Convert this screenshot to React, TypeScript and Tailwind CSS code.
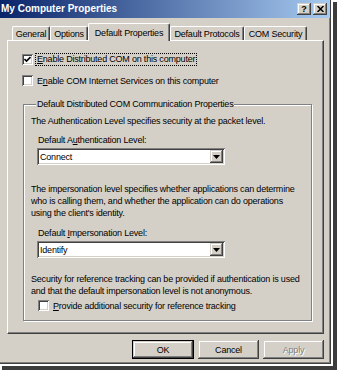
import React from "react";

const raised =
  "shadow-[inset_-1px_-1px_#404040,inset_1px_1px_#d4d0c8,inset_-2px_-2px_#808080,inset_2px_2px_#fff]";
const sunken =
  "shadow-[inset_1px_1px_#808080,inset_-1px_-1px_#fff,inset_2px_2px_#404040,inset_-2px_-2px_#d4d0c8]";

function Check({ checked }: { checked?: boolean }) {
  return (
    <span className={`w-[11px] h-[11px] shrink-0 bg-white flex items-center justify-center ${sunken}`}>
      {checked && (
        <svg width="7" height="7" viewBox="0 0 7 7">
          <path d="M0.5 3 L2.5 5 L6.5 1" stroke="#000" strokeWidth="1.6" fill="none" />
        </svg>
      )}
    </span>
  );
}

function Select({ value }: { value: string }) {
  return (
    <div className={`w-[188px] h-[17px] bg-white flex items-center pl-[3px] pr-[2px] ${sunken}`}>
      <span className="flex-1">{value}</span>
      <span className={`w-[13px] h-[13px] bg-[#d4d0c8] flex items-center justify-center ${raised}`}>
        <svg width="7" height="4" viewBox="0 0 7 4">
          <path d="M0 0 H7 L3.5 4 Z" fill="#000" />
        </svg>
      </span>
    </div>
  );
}

function Tab({ label, w, active }: { label: string; w: string; active?: boolean }) {
  if (active) {
    return (
      <div
        className={`${w} h-[18px] -mb-px relative z-10 bg-[#d4d0c8] rounded-t-[2px] border-l border-t border-white border-r border-r-[#404040] shadow-[inset_-1px_0_#808080] flex items-start justify-center pt-[3px]`}
      >
        {label}
      </div>
    );
  }
  return (
    <div
      className={`${w} h-[14px] rounded-t-[2px] border-l border-t border-white border-r border-r-[#404040] shadow-[inset_-1px_0_#808080] flex items-start justify-center pt-[1px]`}
    >
      {label}
    </div>
  );
}

function Button({ label, primary, disabled }: { label: string; primary?: boolean; disabled?: boolean }) {
  return (
    <div
      className={`h-[19px] flex items-center justify-center bg-[#d4d0c8] ${
        primary ? "w-[62px] border border-black" : "w-[61px]"
      } ${raised} ${disabled ? "text-[#808080] [text-shadow:1px_1px_0_#fff]" : ""}`}
    >
      {label}
    </div>
  );
}

export default function App() {
  return (
    <div className="w-[339px] h-[373px] bg-white overflow-hidden font-['Liberation_Sans',Arial,sans-serif] text-[9px] leading-[12px] text-black tracking-[-0.2px]">
      <div className="w-[331px] h-[364px] bg-[#d4d0c8] flex flex-col border-r border-b border-[#404040] shadow-[inset_-1px_-1px_#808080,0_0_0_2px_#fff,4px_4px_0_2px_#3c3c3c]">
        {/* title bar */}
        <div className="h-[18px] flex items-center pl-[1px] pr-[3px] bg-[linear-gradient(to_right,#0a246a,#a6caf0)]">
          <span className="flex-1 text-white font-bold text-[10px] tracking-normal">My Computer Properties</span>
          <span className={`w-[14px] h-[12px] bg-[#d4d0c8] flex items-center justify-center font-bold text-[9px] ${raised}`}>?</span>
          <span className={`w-[14px] h-[12px] ml-[2px] bg-[#d4d0c8] flex items-center justify-center ${raised}`}>
            <svg width="7" height="6" viewBox="0 0 7 6">
              <path d="M0.5 0 L6.5 6 M6.5 0 L0.5 6" stroke="#000" strokeWidth="1.5" />
            </svg>
          </span>
        </div>

        {/* tabs */}
        <div className="h-[22px] flex items-end pl-[12px]">
          <Tab label="General" w="w-[38px]" />
          <Tab label="Options" w="w-[38px]" />
          <Tab label="Default Properties" w="w-[82px]" active />
          <Tab label="Default Protocols" w="w-[74px]" />
          <Tab label="COM Security" w="w-[63px]" />
        </div>

        {/* panel */}
        <div className="ml-[7px] w-[317px] h-[294px] border-l border-t border-white border-r border-b border-r-[#404040] border-b-[#404040] shadow-[inset_-1px_-1px_#808080] pl-[14px] pt-[12px]">
          <div className="h-[13px] flex items-center">
            <Check checked />
            <span className="ml-[2px] px-[1px] border border-dotted border-black leading-[11px]">
              <u>E</u>nable Distributed COM on this computer
            </span>
          </div>
          <div className="h-[13px] mt-[8px] flex items-center">
            <Check />
            <span className="ml-[4px]">
              E<u>n</u>able COM Internet Services on this computer
            </span>
          </div>

          <fieldset className="mt-[11px] ml-[1px] w-[289px] border border-[#808080] shadow-[inset_1px_1px_0_#fff,1px_1px_0_#fff] pl-[7px] pb-[8px]">
            <legend className="ml-[5px] px-[1px] bg-[#d4d0c8]">Default Distributed COM Communication Properties</legend>
            <p className="mt-[5px]">The Authentication Level specifies security at the packet level.</p>
            <p className="mt-[7px] ml-[7px]">
              Default A<u>u</u>thentication Level:
            </p>
            <div className="mt-[2px] ml-[6px]">
              <Select value="Connect" />
            </div>
            <p className="mt-[18px]">
              The impersonation level specifies whether applications can determine
              <br />
              who is calling them, and whether the application can do operations
              <br />
              using the client's identity.
            </p>
            <p className="mt-[8px] ml-[7px]">
              Default <u>I</u>mpersonation Level:
            </p>
            <div className="mt-[2px] ml-[6px]">
              <Select value="Identify" />
            </div>
            <p className="mt-[15px]">
              Security for reference tracking can be provided if authentication is used
              <br />
              and that the default impersonation level is not anonymous.
            </p>
            <div className="h-[13px] mt-[2px] ml-[7px] flex items-center">
              <Check />
              <span className="ml-[4px]">
                <u>P</u>rovide additional security for reference tracking
              </span>
            </div>
          </fieldset>
        </div>

        {/* buttons */}
        <div className="mt-[6px] flex justify-end gap-[4px] pr-[6px]">
          <Button label="OK" primary />
          <Button label="Cancel" />
          <Button label="Apply" disabled />
        </div>
      </div>
    </div>
  );
}
